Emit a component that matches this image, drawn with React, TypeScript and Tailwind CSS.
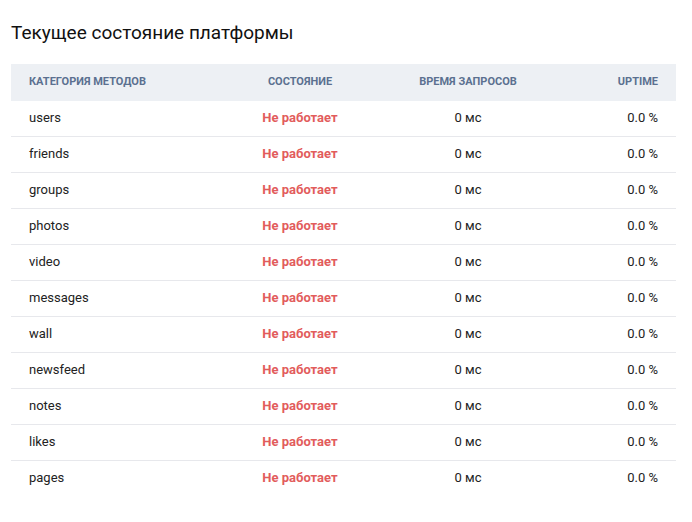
import React from "react";

const rows = ["users", "friends", "groups", "photos", "video", "messages", "wall", "newsfeed", "notes", "likes", "pages"];

export default function App() {
  return (
    <div className="w-[692px] h-[522px] bg-white pl-[11px] pr-[16px] pt-[21px] font-['Roboto',sans-serif]">
      <h1 className="text-[19px] leading-[24px] text-[#111] font-normal">Текущее состояние платформы</h1>
      <div className="mt-[19px]">
        <div className="grid grid-cols-[215px_148px_188px_1fr] h-[37px] items-center bg-[#edf0f4] text-[11px] font-bold uppercase text-[#5b7090]">
          <div className="pl-[18px]">Категория методов</div>
          <div className="text-center">Состояние</div>
          <div className="text-center">Время запросов</div>
          <div className="text-right pr-[18px]">Uptime</div>
        </div>
        {rows.map((r, i) => (
          <div
            key={r}
            className={
              i < rows.length - 1
                ? "grid grid-cols-[215px_148px_188px_1fr] h-[36px] pb-[2px] items-center text-[13px] text-[#222] border-b border-[#e7e8ec]"
                : "grid grid-cols-[215px_148px_188px_1fr] h-[36px] pb-[2px] items-center text-[13px] text-[#222]"
            }
          >
            <div className="pl-[18px]">{r}</div>
            <div className="text-center font-bold text-[#e25c5c]">Не работает</div>
            <div className="text-center">0 мс</div>
            <div className="text-right pr-[18px]">0.0 %</div>
          </div>
        ))}
      </div>
    </div>
  );
}
